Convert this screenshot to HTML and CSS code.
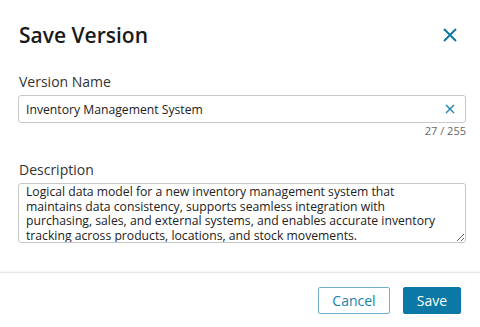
FILE: index.html
```html
<!DOCTYPE html>
<html lang="en">

<head>
    <meta charset="UTF-8">
    <meta name="viewport" content="width=device-width, initial-scale=1.0">
    <title>Save Version</title>
    <link rel="stylesheet" href="styles.css">
</head>

<body>
    <div class="dialog">
        <div class="dialog-body">
            <div class="dialog-header">
                <h1>Save Version</h1>
                <button class="btn-close" aria-label="Close">
                    <svg width="14" height="14" viewBox="0 0 14 14">
                        <path d="M1 1 L13 13 M13 1 L1 13" stroke="#0b78a5" stroke-width="2" fill="none" />
                    </svg>
                </button>
            </div>
            <label class="field-label">Version Name</label>
            <div class="input-wrap">
                <input type="text" value="Inventory Management System" autocomplete="off">
                <button class="btn-clear" aria-label="Clear">
                    <svg width="10" height="10" viewBox="0 0 10 10">
                        <path d="M1 1 L9 9 M9 1 L1 9" stroke="#1b84b0" stroke-width="1.4" fill="none" />
                    </svg>
                </button>
            </div>
            <div class="counter">27 / 255</div>
            <label class="field-label">Description</label>
            <textarea>Logical data model for a new inventory management system that maintains data consistency, supports seamless integration with purchasing, sales, and external systems, and enables accurate inventory tracking across products, locations, and stock movements.</textarea>
        </div>
        <div class="dialog-footer">
            <button class="btn btn-secondary">Cancel</button>
            <button class="btn btn-primary">Save</button>
        </div>
    </div>
</body>

</html>
```

FILE: styles.css
```css
html,
body {
    margin: 0;
    padding: 0;
    background-color: #fff;
    font-family: 'Open Sans', 'Noto Sans', sans-serif;
    color: #222;
}

.dialog {
    width: 480px;
    height: 327px;
    display: flex;
    flex-direction: column;
}

.dialog-body {
    padding: 19px 14px 0 18px;
    flex: 1;
}

.dialog-header {
    display: flex;
    justify-content: space-between;
    align-items: center;
    margin-bottom: 21px;
}

.dialog-header h1 {
    margin: 0;
    font-size: 21px;
    font-weight: 600;
    line-height: 32px;
    padding-left: 1px;
    color: #1a1a1a;
}

.btn-close {
    border: none;
    background: none;
    padding: 0;
    margin-right: 9px;
    width: 14px;
    height: 14px;
    display: flex;
    cursor: pointer;
}

.field-label {
    display: block;
    font-size: 14px;
    line-height: 20px;
    margin-bottom: 3px;
    padding-left: 1px;
    color: #333;
}

.input-wrap {
    position: relative;
    width: 448px;
}

input {
    box-sizing: border-box;
    width: 448px;
    height: 28px;
    padding: 0 28px 0 7px;
    border: 1px solid #c8c8c8;
    border-radius: 3px;
    font-family: inherit;
    font-size: 12.2px;
    color: #222;
    outline: none;
}

.btn-clear {
    position: absolute;
    right: 11px;
    top: 9px;
    border: none;
    background: none;
    padding: 0;
    display: flex;
}

.counter {
    width: 448px;
    text-align: right;
    font-size: 11px;
    line-height: 14px;
    color: #666;
    margin-top: 1px;
    margin-bottom: 22px;
}

textarea {
    display: block;
    box-sizing: border-box;
    width: 448px;
    height: 60px;
    padding: 1px 24px 0 7px;
    border: 1px solid #c8c8c8;
    border-radius: 3px;
    font-family: inherit;
    font-size: 12.2px;
    line-height: 14.5px;
    color: #222;
    outline: none;
    overflow: hidden;
}

.dialog-footer {
    border-top: 1px solid #e6e6e6;
    box-shadow: 0 -1px 2px rgba(0, 0, 0, 0.04);
    display: flex;
    justify-content: flex-end;
    gap: 13px;
    padding: 14px 19px 13px;
}

.btn {
    height: 27px;
    border-radius: 2px;
    font-family: inherit;
    font-size: 14px;
    cursor: pointer;
    padding: 0;
}

.btn-secondary {
    width: 72px;
    background-color: #fff;
    border: 1px solid #6fb1cd;
    color: #1b7fab;
}

.btn-primary {
    width: 58px;
    background-color: #0b78a5;
    border: 1px solid #0b78a5;
    color: #fff;
}
```
